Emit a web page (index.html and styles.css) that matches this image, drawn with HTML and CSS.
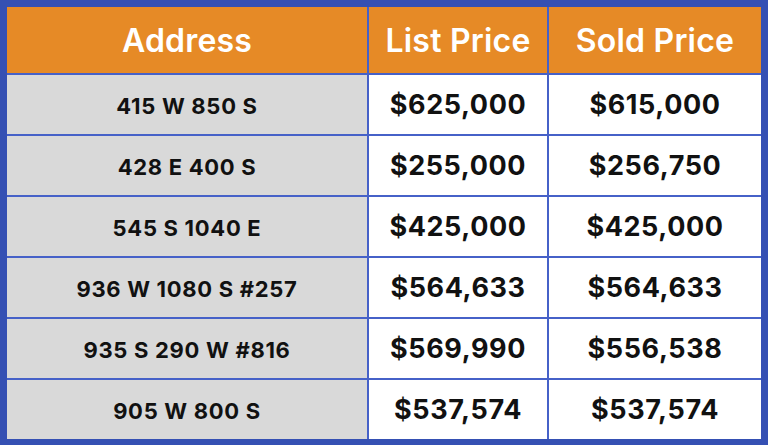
FILE: index.html
```html
<!DOCTYPE html>
<html>
<head>
<meta charset="utf-8">
<link rel="stylesheet" href="styles.css">
</head>
<body>
<div class="frame">
  <div class="grid">
    <div class="cell head">Address</div>
    <div class="cell head">List Price</div>
    <div class="cell head">Sold Price</div>

    <div class="cell addr">415 W 850 S</div>
    <div class="cell price">$625,000</div>
    <div class="cell price">$615,000</div>

    <div class="cell addr">428 E 400 S</div>
    <div class="cell price">$255,000</div>
    <div class="cell price">$256,750</div>

    <div class="cell addr">545 S 1040 E</div>
    <div class="cell price">$425,000</div>
    <div class="cell price">$425,000</div>

    <div class="cell addr">936 W 1080 S #257</div>
    <div class="cell price">$564,633</div>
    <div class="cell price">$564,633</div>

    <div class="cell addr">935 S 290 W #816</div>
    <div class="cell price">$569,990</div>
    <div class="cell price">$556,538</div>

    <div class="cell addr">905 W 800 S</div>
    <div class="cell price">$537,574</div>
    <div class="cell price">$537,574</div>
  </div>
</div>
</body>
</html>
```
FILE: styles.css
```css
html, body {
  margin: 0;
  padding: 0;
}
body {
  width: 768px;
  height: 445px;
  overflow: hidden;
  background: #3550b3;
  font-family: "Inter", "Liberation Sans", sans-serif;
  font-weight: 700;
  color: #111;
}
.frame {
  padding: 7px;
}
.grid {
  display: grid;
  grid-template-columns: 360px 178px 212px;
  grid-template-rows: 66px repeat(6, 59px);
  gap: 2px;
  background: #4661c8;
  width: 754px;
}
.cell {
  display: flex;
  align-items: center;
  justify-content: center;
  background: #fff;
}
.head {
  background: #e68a26;
  color: #fff;
  font-size: 32px;
  font-weight: 600;
  letter-spacing: 0.2px;
}
.addr {
  background: #d9d9d9;
  font-size: 22px;
  letter-spacing: 0.7px;
  padding-top: 2px;
}
.price {
  font-size: 27px;
  letter-spacing: 0.6px;
}
```
